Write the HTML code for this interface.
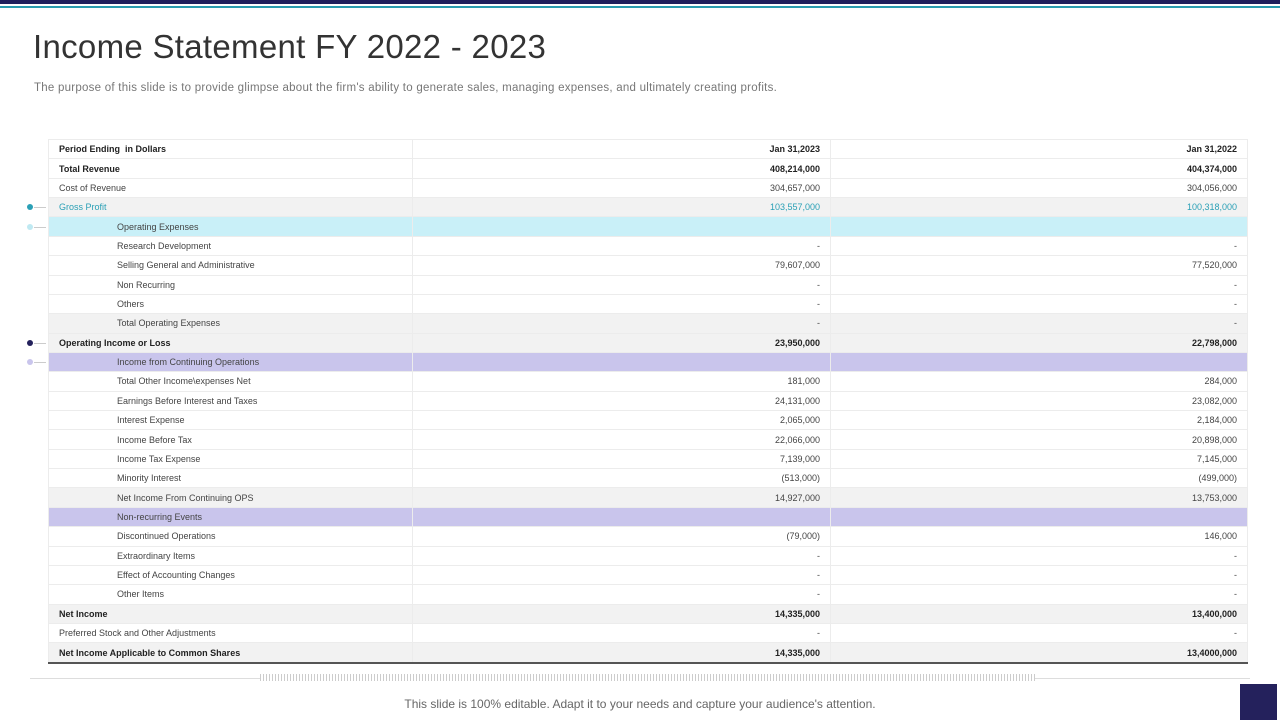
<!DOCTYPE html><html><head><style>
body{margin:0;width:1280px;height:720px;background:#fff;position:relative;overflow:hidden;font-family:"Liberation Sans",sans-serif}
.t1{position:absolute;left:0;top:0;width:1280px;height:4px;background:#1f1f5c}
.t2{position:absolute;left:0;top:6px;width:1280px;height:2px;background:#2a9cb0}
h1{position:absolute;left:33px;top:28px;margin:0;font-weight:normal;font-size:33px;color:#333;letter-spacing:0.3px}
.sub{position:absolute;left:34px;top:82px;font-size:11.5px;color:#777;letter-spacing:0.25px}
table{position:absolute;left:48px;top:139px;width:1199px;border-collapse:collapse;table-layout:fixed;font-size:9px;color:#444}
td{height:18.37px;padding:0 10px;border:1px solid #ececec;white-space:nowrap;overflow:hidden}
td:nth-child(2),td:nth-child(3){text-align:right}
.b td{font-weight:bold;color:#222}
.g td{background:#f2f2f2}
.c td{background:#c9f0f8}
.l td{background:#c9c5ec}
.i td:first-child{padding-left:68px}
.gp td{color:#2aa0b6}
.last td{border-bottom:2px solid #555}
.dot{position:absolute;left:27px;width:6px;height:6px;border-radius:50%}
.ar{position:absolute;left:34px;width:12px;height:1px;background:#ccc}
.foot{position:absolute;top:697px;width:1280px;text-align:center;font-size:12px;color:#666}
.hl{position:absolute;top:678px;height:1px;background:#ddd}
.hatch{position:absolute;left:260px;top:674px;width:775px;height:7px;background:repeating-linear-gradient(90deg,#ccc 0 1px,#fff 1px 3px)}
.sq{position:absolute;left:1240px;top:684px;width:37px;height:36px;background:#24215c}
</style></head><body>
<div class="t1"></div><div class="t2"></div>
<h1>Income Statement FY 2022 - 2023</h1>
<div class="sub">The purpose of this slide is to provide glimpse about the firm's ability to generate sales, managing expenses, and ultimately creating profits.</div>
<div class="dot" style="top:204px;background:#2aa0b6"></div><div class="ar" style="top:207px"></div>
<div class="dot" style="top:224px;background:#bfe9f2"></div><div class="ar" style="top:227px"></div>
<div class="dot" style="top:340px;background:#24215c"></div><div class="ar" style="top:343px"></div>
<div class="dot" style="top:359px;background:#c9c5ec"></div><div class="ar" style="top:362px"></div>
<table>
<colgroup><col style="width:364px"><col style="width:418px"><col style="width:417px"></colgroup>
<tr class="b"><td>Period Ending&nbsp; in Dollars</td><td>Jan 31,2023</td><td>Jan 31,2022</td></tr>
<tr class="b"><td>Total Revenue</td><td>408,214,000</td><td>404,374,000</td></tr>
<tr><td>Cost of Revenue</td><td>304,657,000</td><td>304,056,000</td></tr>
<tr class="g gp"><td>Gross Profit</td><td>103,557,000</td><td>100,318,000</td></tr>
<tr class="c i"><td>Operating Expenses</td><td></td><td></td></tr>
<tr class="i"><td>Research Development</td><td>-</td><td>-</td></tr>
<tr class="i"><td>Selling General and Administrative</td><td>79,607,000</td><td>77,520,000</td></tr>
<tr class="i"><td>Non Recurring</td><td>-</td><td>-</td></tr>
<tr class="i"><td>Others</td><td>-</td><td>-</td></tr>
<tr class="i g"><td>Total Operating Expenses</td><td>-</td><td>-</td></tr>
<tr class="b g"><td>Operating Income or Loss</td><td>23,950,000</td><td>22,798,000</td></tr>
<tr class="l i"><td>Income from Continuing Operations</td><td></td><td></td></tr>
<tr class="i"><td>Total Other Income\expenses Net</td><td>181,000</td><td>284,000</td></tr>
<tr class="i"><td>Earnings Before Interest and Taxes</td><td>24,131,000</td><td>23,082,000</td></tr>
<tr class="i"><td>Interest Expense</td><td>2,065,000</td><td>2,184,000</td></tr>
<tr class="i"><td>Income Before Tax</td><td>22,066,000</td><td>20,898,000</td></tr>
<tr class="i"><td>Income Tax Expense</td><td>7,139,000</td><td>7,145,000</td></tr>
<tr class="i"><td>Minority Interest</td><td>(513,000)</td><td>(499,000)</td></tr>
<tr class="i g"><td>Net Income From Continuing OPS</td><td>14,927,000</td><td>13,753,000</td></tr>
<tr class="l i"><td>Non-recurring Events</td><td></td><td></td></tr>
<tr class="i"><td>Discontinued Operations</td><td>(79,000)</td><td>146,000</td></tr>
<tr class="i"><td>Extraordinary Items</td><td>-</td><td>-</td></tr>
<tr class="i"><td>Effect of Accounting Changes</td><td>-</td><td>-</td></tr>
<tr class="i"><td>Other Items</td><td>-</td><td>-</td></tr>
<tr class="b g"><td>Net Income</td><td>14,335,000</td><td>13,400,000</td></tr>
<tr><td>Preferred Stock and Other Adjustments</td><td>-</td><td>-</td></tr>
<tr class="b g last"><td>Net Income Applicable to Common Shares</td><td>14,335,000</td><td>13,4000,000</td></tr>
</table>
<div class="hl" style="left:30px;width:230px"></div><div class="hatch"></div><div class="hl" style="left:1035px;width:215px"></div>
<div class="foot">This slide is 100% editable. Adapt it to your needs and capture your audience's attention.</div>
<div class="sq"></div>
</body></html>
